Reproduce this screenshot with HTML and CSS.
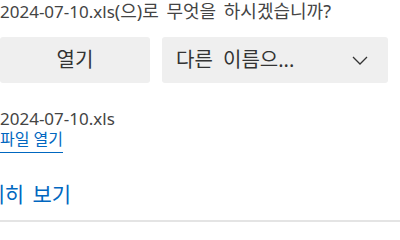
FILE: index.html
```html
<!DOCTYPE html>
<html lang="ko">
<head>
<meta charset="utf-8">
<link rel="stylesheet" href="styles.css">
</head>
<body>
<div class="panel">
  <p class="question"><span class="lat">2024-07-10.xls</span>(으)로 무엇을 하시겠습니까?</p>
  <div class="actions">
    <button class="btn btn-open">열기</button>
    <button class="btn btn-save">
      <span class="save-label">다른 이름으...</span>
      <svg class="chev" width="16" height="9" viewBox="0 0 16 9"><path d="M1 1 L8 8 L15 1" fill="none" stroke="#333" stroke-width="1.3"/></svg>
    </button>
  </div>
  <div class="file">
    <div class="fname">2024-07-10.xls</div>
    <a class="open-link" href="#">파일 열기</a>
  </div>
  <a class="more" href="#">자세히 보기</a>
  <div class="divider"></div>
</div>
</body>
</html>
```
FILE: styles.css
```css
html, body {
  margin: 0;
  padding: 0;
  background: #ffffff;
}
.panel {
  width: 400px;
  height: 225px;
  overflow: hidden;
  display: flex;
  flex-direction: column;
  font-family: "Noto Sans", "Noto Sans CJK KR", sans-serif;
  color: #444;
}
.question {
  margin: 0;
  font-size: 18px;
  line-height: 22px;
  word-spacing: 3px;
  white-space: nowrap;
}
.question .lat {
  font-size: 17px;
  word-spacing: 0;
}
.actions {
  display: flex;
  gap: 12px;
  margin-top: 14px;
}
.btn {
  height: 46px;
  border: none;
  border-radius: 3px;
  background: #efefef;
  font-family: "Noto Sans", "Noto Sans CJK KR", sans-serif;
  font-size: 20px;
  line-height: 24px;
  color: #333;
  padding: 0;
}
.btn-open {
  width: 150px;
}
.btn-save {
  width: 226px;
  display: flex;
  align-items: center;
  justify-content: space-between;
  padding: 0 20px 0 14px;
}
.save-label {
  word-spacing: 5px;
}
.chev {
  display: block;
}
.file {
  margin-top: 26px;
  display: flex;
  flex-direction: column;
  align-items: flex-start;
}
.fname {
  font-size: 17px;
  line-height: 20px;
  color: #444;
}
.open-link {
  font-size: 16px;
  line-height: 20px;
  padding-bottom: 3px;
  color: #0067c0;
  text-decoration: none;
  border-bottom: 1px solid #0067c0;
}
.more {
  margin-top: 29px;
  margin-left: -34px;
  font-size: 21px;
  line-height: 24px;
  word-spacing: 3px;
  color: #0067c0;
  text-decoration: none;
  white-space: nowrap;
}
.divider {
  margin-top: 14px;
  height: 2px;
  background: #e4e4e4;
}
```
